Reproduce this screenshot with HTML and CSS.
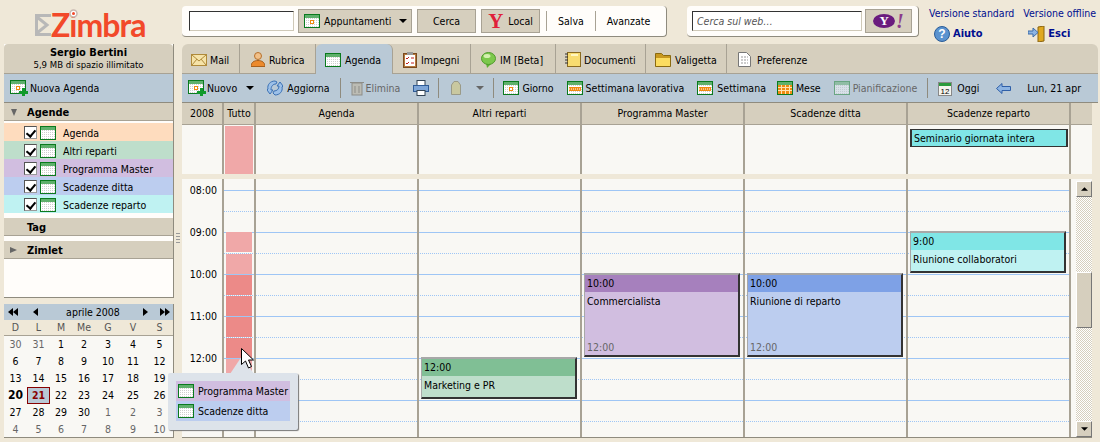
FILE: index.html
```html
<!DOCTYPE html>
<html>
<head>
  <meta charset="utf-8">
  <title>Zimbra Agenda</title>
  <link rel="stylesheet" href="styles.css">
</head>
<body>
  <svg class="defs" width="0" height="0">
    <defs>
      <pattern id="dots" width="2" height="2" patternUnits="userSpaceOnUse">
        <rect width="2" height="2" fill="#fff"/><rect width="1" height="1" fill="#cfcfcf"/>
      </pattern>
      <symbol id="cal" viewBox="0 0 16 14">
        <rect x=".5" y=".5" width="15" height="13" fill="url(#dots)" stroke="#0a7a1e"/>
        <rect x="1" y="1" width="14" height="3" fill="#5fb06c"/>
      </symbol>
      <symbol id="cal-day" viewBox="0 0 16 14">
        <use href="#cal"/>
        <rect x="6" y="6" width="4" height="4" fill="#f08a10"/><rect x="7" y="7" width="2" height="2" fill="#fff"/>
      </symbol>
      <symbol id="cal-week" viewBox="0 0 16 14">
        <use href="#cal"/>
        <rect x="2" y="6" width="12" height="4" fill="#f08a10"/>
        <path d="M2 8h12" stroke="#fff" stroke-dasharray="1 1"/>
      </symbol>
      <symbol id="cal-month" viewBox="0 0 16 14">
        <use href="#cal"/>
        <rect x="1" y="4" width="14" height="9" fill="#f08a10"/>
        <path d="M1 6.500h14M1 9.500h14M4.500 4v9M8.500 4v9M12.500 4v9" stroke="#ffe2b0"/>
      </symbol>
      <symbol id="cal-new" viewBox="0 0 18 16">
        <use href="#cal-day" width="16" height="14"/>
        <path d="M12 8h3v3h3v3h-3v3h-3v-3H9v-3h3z" fill="#119a2c"/>
      </symbol>
      <symbol id="down" viewBox="0 0 8 4"><path d="M0 0h8L4 4z"/></symbol>
      <symbol id="left" viewBox="0 0 5 8"><path d="M5 0v8L0 4z"/></symbol>
      <symbol id="right" viewBox="0 0 5 8"><path d="M0 0v8l5-4z"/></symbol>
    </defs>
  </svg>

  <div class="app">
    <header class="top">
      <div class="logo">
        <svg class="logo-mail" width="16" height="22" viewBox="0 0 16 22"><path d="M0 1.500h16M0 20.500h16M1.500 1v20M2 3l10 8L2 19" fill="none" stroke="#b8b8b8" stroke-width="3"/></svg>
        <span class="logo-text">Zimbra</span>
        <svg class="logo-lens" width="10" height="10" viewBox="0 0 10 10"><circle cx="4.500" cy="4.500" r="3.500" fill="#fff" stroke="#c8b8b0" stroke-width="1.500"/><circle cx="4.500" cy="4.500" r="1.500" fill="#f2492a"/></svg>
      </div>
      <div class="panel search">
        <input class="field name-field" type="text">
        <button class="btn appt"><svg width="16" height="14"><use href="#cal-day"/></svg>Appuntamenti<svg class="caret" width="8" height="4"><use href="#down"/></svg></button>
        <button class="btn cerca">Cerca</button>
        <button class="btn local"><span class="y-red">Y</span>Local</button>
        <span class="link-btn first">Salva</span>
        <span class="link-btn">Avanzate</span>
      </div>
      <div class="panel web">
        <input class="field web-field" type="text" placeholder="Cerca sul web…">
        <button class="btn yahoo"><span class="y-oval">Y</span><span class="y-bang">!</span></button>
      </div>
      <div class="links">
        <div class="links-col">
          <a>Versione standard</a>
          <a class="strong"><svg width="16" height="16" viewBox="0 0 16 16"><circle cx="8" cy="8" r="7.500" fill="#5b93cf" stroke="#2a5c98"/><text x="8" y="12" class="q">?</text></svg>Aiuto</a>
        </div>
        <div class="links-col">
          <a>Versione offline</a>
          <a class="strong"><svg width="17" height="16" viewBox="0 0 17 16"><path d="M10 1l6-1v15l-6 1z" fill="#e0a820" stroke="#8a6410"/><path d="M0 5h5V2l5 4.500-5 4.500V8H0z" fill="#8db4e2" stroke="#3a6aa8"/></svg>Esci</a>
        </div>
      </div>
    </header>

    <div class="body">
      <aside class="side">
        <div class="side-box">
          <div class="user">
            <b>Sergio Bertini</b>
            <span>5,9 MB di spazio illimitato</span>
          </div>
          <div class="new-cal"><svg width="18" height="16"><use href="#cal-new"/></svg>Nuova Agenda</div>
          <div class="sec-head"><i class="tri-down"></i>Agende</div>
          <ul class="cal-list">
            <li class="c-orange"><i class="check"></i><svg width="16" height="14"><use href="#cal"/></svg>Agenda</li>
            <li class="c-green"><i class="check"></i><svg width="16" height="14"><use href="#cal"/></svg>Altri reparti</li>
            <li class="c-purple"><i class="check"></i><svg width="16" height="14"><use href="#cal"/></svg>Programma Master</li>
            <li class="c-blue"><i class="check"></i><svg width="16" height="14"><use href="#cal"/></svg>Scadenze ditta</li>
            <li class="c-cyan"><i class="check"></i><svg width="16" height="14"><use href="#cal"/></svg>Scadenze reparto</li>
          </ul>
          <div class="sec-head tag">Tag</div>
          <div class="sec-head zimlet"><i class="tri-right"></i>Zimlet</div>
        </div>
        <div class="mini">
          <div class="mini-head">
            <svg class="n-dbl" width="10" height="8"><use href="#left" width="5" height="8"/><use href="#left" x="5" width="5" height="8"/></svg>
            <svg class="n-one" width="5" height="8"><use href="#left"/></svg>
            <span class="month">aprile 2008</span>
            <svg class="n-one-r" width="5" height="8"><use href="#right"/></svg>
            <svg class="n-dbl-r" width="10" height="8"><use href="#right" width="5" height="8"/><use href="#right" x="5" width="5" height="8"/></svg>
          </div>
          <div class="mini-days"><span>D</span><span>L</span><span>M</span><span>Me</span><span>G</span><span>V</span><span>S</span></div>
          <div class="mini-grid">
            <span class="off">30</span><span class="off">31</span><span>1</span><span>2</span><span>3</span><span>4</span><span>5</span>
            <span>6</span><span>7</span><span>8</span><span>9</span><span>10</span><span>11</span><span>12</span>
            <span>13</span><span>14</span><span>15</span><span>16</span><span>17</span><span>18</span><span>19</span>
            <span class="bold">20</span><span class="today">21</span><span>22</span><span>23</span><span>24</span><span>25</span><span>26</span>
            <span>27</span><span>28</span><span>29</span><span>30</span><span class="off">1</span><span class="off">2</span><span class="off">3</span>
            <span class="off">4</span><span class="off">5</span><span class="off">6</span><span class="off">7</span><span class="off">8</span><span class="off">9</span><span class="off">10</span>
          </div>
        </div>
      </aside>

      <div class="sash"><i></i><i></i><i></i><i></i></div>

      <main class="main">
        <nav class="tabs">
          <span class="tab w-mail"><svg width="16" height="12" viewBox="0 0 16 12"><rect x=".5" y=".5" width="15" height="11" fill="#f6e3a8" stroke="#b08a3a"/><path d="M1 1l7 6 7-6M1 11l5-6M15 11l-5-6" fill="none" stroke="#b08a3a"/></svg>Mail</span>
          <span class="tab w-rubrica"><svg width="14" height="15" viewBox="0 0 14 15"><circle cx="7" cy="4" r="3.500" fill="#f2c088" stroke="#b5702c"/><path d="M0 14.500c0-4 3-6 7-6s7 2 7 6z" fill="#ec8a2c" stroke="#a8601c"/></svg>Rubrica</span>
          <span class="tab active w-agenda"><svg width="16" height="14"><use href="#cal"/></svg>Agenda</span>
          <span class="tab w-impegni"><svg width="14" height="16" viewBox="0 0 14 16"><rect x=".5" y="1.500" width="13" height="14" fill="#b5783c" stroke="#7a4a20"/><rect x="2" y="3" width="10" height="11" fill="#fff"/><rect x="4" y="0" width="6" height="3" fill="#999"/><path d="M3 6l1 1 2-2M3 11l1 1 2-2M8 6h3M8 11h3" fill="none" stroke="#c02020"/></svg>Impegni</span>
          <span class="tab w-im"><svg width="15" height="16" viewBox="0 0 15 16"><path d="M5 11l1 5 4-4z" fill="#5cb030"/><ellipse cx="7.500" cy="6.500" rx="7" ry="6" fill="#7cc84c" stroke="#4f9a2c"/><ellipse cx="6" cy="4" rx="3.500" ry="2" fill="#d4f0b0"/></svg>IM [Beta]</span>
          <span class="tab w-doc"><svg width="16" height="15" viewBox="0 0 16 15"><rect x="2.500" y=".5" width="13" height="14" fill="#f8dc70" stroke="#8a6a20"/><path d="M0 2h3M0 5h3M0 8h3M0 11h3" stroke="#333"/><path d="M6 3h7" stroke="#fff6c0" stroke-width="2"/></svg>Documenti</span>
          <span class="tab w-val"><svg width="16" height="14" viewBox="0 0 16 14"><path d="M.5 13.500v-13h6l2 2h7v11z" fill="#c89820" stroke="#8a6a10"/><rect x="1" y="5" width="14" height="8" fill="#fbdc60"/></svg>Valigetta</span>
          <span class="tab last"><svg width="13" height="15" viewBox="0 0 13 15"><path d="M.5.5h8l4 4v10H.5z" fill="#fff" stroke="#777"/><path d="M3 5h7M3 8h7M3 11h7" stroke="#999" stroke-dasharray="2 1"/></svg>Preferenze</span>
        </nav>

        <div class="tools">
          <span class="tool s-nuovo"><svg width="18" height="16"><use href="#cal-new"/></svg>Nuovo<svg class="caret" width="8" height="4"><use href="#down"/></svg></span>
          <span class="tool s-aggiorna"><svg width="16" height="16" viewBox="0 0 16 16"><path d="M8 1C3 1 0 5 1 9l-1 1 3 4 3-4H4C4 6 6 4 9 4l1-2zM8 15c5 0 8-4 7-8l1-1-3-4-3 4h2c0 3-2 5-5 5l-1 2z" fill="#9cc0e8" stroke="#3a70b4"/></svg>Aggiorna</span>
          <i class="sep"></i>
          <span class="tool off s-elimina"><svg width="14" height="16" viewBox="0 0 14 16"><rect x="2" y="3" width="10" height="12" fill="#bcbcb4" stroke="#8d8d88"/><path d="M0 2.500h14M5 6v7M9 6v7" stroke="#8d8d88"/></svg>Elimina</span>
          <span class="tool s-print"><svg width="16" height="16" viewBox="0 0 16 16"><rect x="4" y=".5" width="8" height="5" fill="#fff" stroke="#345"/><rect x=".5" y="5.500" width="15" height="6" fill="#7ea6d8" stroke="#2f5b96"/><rect x="4" y="10.500" width="8" height="5" fill="#fff" stroke="#345"/></svg></span>
          <i class="sep"></i>
          <span class="tool s-tag"><svg width="10" height="14" viewBox="0 0 10 14"><path d="M.5 4L3 .5h4L9.500 4v9.500H.5z" fill="#c9c8a0" stroke="#9a9a88"/></svg></span>
          <span class="tool off s-caret"><svg class="caret" width="8" height="4"><use href="#down"/></svg></span>
          <i class="sep"></i>
          <span class="tool s-giorno"><svg width="16" height="14"><use href="#cal-day"/></svg>Giorno</span>
          <span class="tool s-lav"><svg width="16" height="14"><use href="#cal-week"/></svg>Settimana lavorativa</span>
          <span class="tool s-sett"><svg width="16" height="14"><use href="#cal-week"/></svg>Settimana</span>
          <span class="tool s-mese"><svg width="16" height="14"><use href="#cal-month"/></svg>Mese</span>
          <span class="tool off s-pian"><svg class="faded" width="16" height="14"><use href="#cal"/></svg>Pianificazione</span>
          <i class="sep"></i>
          <span class="tool s-oggi"><svg width="14" height="15" viewBox="0 0 14 15"><rect x=".5" y="1.500" width="13" height="13" fill="#f4f4ee" stroke="#888"/><rect x="1" y="2" width="12" height="3" fill="#2a9a3c"/><text x="7" y="13" class="num">12</text></svg>Oggi</span>
          <span class="tool s-back"><svg width="15" height="11" viewBox="0 0 15 11"><path d="M.5 5.500L6 .5v3h8.500v4H6v3z" fill="#8db4e2" stroke="#2f5fa8"/></svg></span>
          <span class="tool s-date">Lun, 21 apr</span>
        </div>

        <div class="cols head">
          <div>2008</div><div>Tutto</div><div>Agenda</div><div>Altri reparti</div><div>Programma Master</div><div>Scadenze ditta</div><div>Scadenze reparto</div><div class="blank"></div>
        </div>
        <div class="cols allday">
          <div></div>
          <div class="all-cell"><i class="all-bar"></i></div>
          <div></div><div></div><div></div><div></div>
          <div class="seminar-cell"><span class="seminar">Seminario giornata intera</span></div>
          <div class="blank"></div>
        </div>
        <div class="split"></div>
        <div class="cols grid">
          <div class="hours"><span>08:00</span><span>09:00</span><span>10:00</span><span>11:00</span><span>12:00</span></div>
          <div class="free">
            <i class="slot light" style="top:53px;height:20px"></i>
            <i class="slot light" style="top:75px;height:20px"></i>
            <i class="slot dark" style="top:96px;height:20px"></i>
            <i class="slot dark" style="top:117px;height:20px"></i>
            <i class="slot dark" style="top:138px;height:20px"></i>
            <i class="slot dark" style="top:159px;height:20px"></i>
            <i class="slot light" style="top:180px;height:20px"></i>
            <i class="slot light" style="top:201px;height:20px"></i>
          </div>
          <div></div>
          <div><div class="event green" style="top:178px;height:42px"><b>12:00</b><p>Marketing e PR</p></div></div>
          <div><div class="event purple" style="top:94px;height:84px"><b>10:00</b><p>Commercialista</p><em>12:00</em></div></div>
          <div><div class="event blue" style="top:94px;height:84px"><b>10:00</b><p>Riunione di reparto</p><em>12:00</em></div></div>
          <div><div class="event cyan" style="top:52px;height:42px"><b>9:00</b><p>Riunione collaboratori</p></div></div>
          <div class="blank scroll-cell">
            <div class="scrollbar">
              <span class="sb-btn"><svg width="7" height="4"><use href="#down"/></svg></span>
              <span class="sb-track"><i class="sb-thumb"></i></span>
              <span class="sb-btn"><svg width="7" height="4"><use href="#down"/></svg></span>
            </div>
          </div>
        </div>
      </main>
    </div>
  </div>

  <div class="popup">
    <div class="popup-row c-purple"><svg width="16" height="14"><use href="#cal"/></svg>Programma Master</div>
    <div class="popup-row c-blue"><svg width="16" height="14"><use href="#cal"/></svg>Scadenze ditta</div>
  </div>
  <svg class="tail" width="24" height="18" viewBox="0 0 24 18"><path d="M12 0L0 18h24z" fill="#dde3ea"/></svg>
  <svg class="cursor" width="13" height="22" viewBox="0 0 13 22"><path d="M.5.5v16l4-3.500 3 7 3-1.500-3-6.500h5z" fill="#fff" stroke="#000"/></svg>
</body>
</html>
```

FILE: styles.css
```css
* {
  box-sizing: border-box;
}

html, body {
  margin: 0;
  height: 442px;
  overflow: hidden;
}

body {
  position: relative;
  background-color: #efe8d8;
  font-family: "DejaVu Sans Condensed", "DejaVu Sans", sans-serif;
  font-stretch: condensed;
  font-size: 10.5px;
  color: #000;
}

svg {
  flex: none;
  display: block;
}

b, .strong {
  font-size: 11px;
}

.defs {
  position: absolute;
}

.app {
  width: 1100px;
  height: 442px;
  display: flex;
  flex-direction: column;
}

/* top bar */
.top {
  height: 44px;
  display: flex;
  flex: none;
}

.logo {
  width: 182px;
  flex: none;
  padding: 10px 0 0 35px;
  display: flex;
  align-items: flex-start;
  position: relative;
}

.logo-mail {
  margin-top: 4px;
}

.logo-lens {
  position: absolute;
  left: 69px;
  top: 9px;
}

.logo-text {
  font-family: "Lato", sans-serif;
  font-stretch: normal;
  font-size: 32px;
  font-weight: 700;
  line-height: 30px;
  letter-spacing: -1px;
  color: #f2492a;
}

.panel {
  height: 31px;
  flex: none;
  margin-top: 6px;
  background: #fffdfa;
  border-right: 1px solid #8f8b7e;
  border-bottom: 1px solid #8f8b7e;
  border-radius: 4px;
  display: flex;
  align-items: center;
}

.search {
  width: 485px;
  padding-left: 7px;
}

.web {
  width: 232px;
  margin-left: 20px;
  padding-left: 5px;
}

.field {
  height: 20px;
  border: 1px solid #333;
  border-right-color: #cfc9b8;
  border-bottom-color: #cfc9b8;
  background: #fff;
  padding: 0 4px;
  font: inherit;
}

.name-field {
  width: 105px;
}

.web-field {
  width: 170px;
  font-style: italic;
}

.web-field::placeholder {
  color: #555;
}

.btn {
  height: 24px;
  margin-left: 4px;
  padding: 0;
  border: 1px solid;
  border-color: #fff #777 #777 #fff;
  outline: 1px solid #a8a294;
  outline-offset: -1px;
  background: #d6cfbe;
  font: inherit;
  color: #000;
  display: flex;
  align-items: center;
  justify-content: center;
}

.appt {
  width: 114px;
  justify-content: flex-start;
  padding-left: 5px;
}

.appt svg:first-child {
  margin-right: 4px;
}

.appt .caret {
  margin-left: 8px;
}

.cerca,
.local {
  width: 59px;
  margin-left: 5px;
}

.y-red {
  font-family: "Liberation Serif", serif;
  font-stretch: normal;
  font-size: 21px;
  line-height: 21px;
  font-weight: bold;
  color: #e0203a;
  margin-right: 5px;
}

.link-btn {
  height: 20px;
  line-height: 20px;
  padding: 0 11px;
  border-left: 1px solid #a8a294;
}

.link-btn.first {
  margin-left: 6px;
}

.yahoo {
  width: 47px;
  margin-left: 3px;
  gap: 1px;
}

.y-oval {
  width: 22px;
  height: 14px;
  border-radius: 50%;
  background: #6a1b7e;
  color: #fff;
  font-family: "Liberation Serif", serif;
  font-stretch: normal;
  font-weight: bold;
  font-size: 13px;
  line-height: 14px;
  text-align: center;
}

.y-bang {
  font-family: "Liberation Serif", serif;
  font-stretch: normal;
  font-style: italic;
  font-weight: bold;
  font-size: 20px;
  line-height: 18px;
  color: #8c3a8c;
}

.links {
  margin-left: 10px;
  padding-top: 6px;
  display: flex;
  gap: 9px;
}

.links-col {
  display: flex;
  flex-direction: column;
  gap: 5px;
}

.links a {
  color: #000e8f;
  line-height: 14px;
  white-space: nowrap;
  display: flex;
  align-items: center;
  gap: 3px;
  height: 14px;
}

.links a.strong {
  font-weight: bold;
  height: 18px;
  margin-left: 5px;
}

.q {
  font-family: "Liberation Sans", sans-serif;
  font-stretch: normal;
  font-size: 12px;
  font-weight: bold;
  fill: #fff;
  text-anchor: middle;
}

.body {
  flex: 1;
  display: flex;
  min-height: 0;
}

/* left column */
.side {
  width: 170px;
  flex: none;
  margin-left: 4px;
  display: flex;
  flex-direction: column;
}

.side-box {
  height: 254px;
  background: #fffdfa;
  border-right: 1px solid #8f8b7e;
  border-bottom: 1px solid #8f8b7e;
}

.user {
  height: 30px;
  background: #d6cfbe;
  border-radius: 4px 4px 0 0;
  display: flex;
  flex-direction: column;
  align-items: center;
  padding-top: 3px;
  line-height: 12px;
  border-bottom: 1px solid #a8a294;
}

.user span {
  font-size: 9.5px;
}

.new-cal {
  height: 29px;
  background: #b9c9d6;
  display: flex;
  align-items: center;
  gap: 2px;
  padding-left: 6px;
  border-bottom: 1px solid #8f8b7e;
}

.sec-head {
  height: 18px;
  background: #d6cfbe;
  border-bottom: 1px solid #a8a294;
  font-size: 11px;
  font-weight: bold;
  line-height: 19px;
  padding-left: 23px;
  position: relative;
}

.tri-down, .tri-right {
  position: absolute;
  left: 7px;
  top: 6px;
  border-style: solid;
  border-color: transparent;
}

.tri-down {
  border-width: 7px 3.5px 0;
  border-top-color: #666;
}

.tri-right {
  left: 6px;
  border-width: 3.5px 0 3.5px 7px;
  border-left-color: #666;
}

.cal-list {
  list-style: none;
  margin: 2px 0 0;
  padding: 0;
}

.cal-list li {
  height: 18px;
  display: flex;
  align-items: center;
  padding: 1px 0 0 20px;
}

.cal-list svg {
  margin: 0 7px 0 3px;
}

.check {
  width: 13px;
  height: 13px;
  border: 1px solid;
  border-color: #555 #999 #999 #555;
  background: #fff;
  position: relative;
}

.check::after {
  content: "";
  position: absolute;
  left: 3px;
  top: 1px;
  width: 4px;
  height: 7px;
  border: solid #000;
  border-width: 0 2px 2px 0;
  transform: rotate(40deg);
}

.c-orange { background: #fedcbe; }
.c-green { background: #bedecb; }
.c-purple { background: #d1bee0; }
.c-blue { background: #bccdef; }
.c-cyan { background: #bff2f2; }

.tag,
.zimlet {
  margin-top: 5px;
}

.mini {
  height: 134px;
  margin-top: 6px;
  background: #f9f8f4;
  border-right: 1px solid #8f8b7e;
  border-bottom: 1px solid #8f8b7e;
}

.mini-head {
  height: 16px;
  background: #b9c9d6;
  display: flex;
  align-items: center;
  padding-left: 4px;
  white-space: nowrap;
}

.n-one { margin-left: 15px; }
.n-one-r { margin-left: 20px; }
.n-dbl-r { margin-left: 12px; }

.month {
  width: 60px;
  margin-left: 25px;
  text-align: center;
}

.mini-days, .mini-grid {
  display: grid;
  grid-template-columns: 23px 23px 22px 24px 24px 26px 27px;
  text-align: center;
}

.mini-days {
  height: 16px;
  line-height: 15px;
  background: #efe8d8;
  border-bottom: 1px solid #a8a294;
  color: #555;
}

.mini-grid {
  grid-auto-rows: 17px;
  line-height: 17px;
}

.off {
  color: #666;
}

.bold {
  font-weight: bold;
  font-size: 12px;
}

.today {
  background: #b9c9d6;
  border: 1px solid #800;
  color: #800;
  font-weight: bold;
  line-height: 15px;
}

.sash {
  width: 8px;
  flex: none;
  padding: 189px 2px 0;
}

.sash i {
  display: block;
  height: 1px;
  margin-bottom: 2px;
  background: #999;
}

/* main column */
.main {
  width: 916px;
  flex: none;
  display: flex;
  flex-direction: column;
}

.tabs {
  height: 30px;
  flex: none;
  background: #d6cfbe;
  border-radius: 6px 6px 0 0;
  border-bottom: 1px solid #a8a294;
  display: flex;
}

.tab {
  height: 29px;
  display: flex;
  align-items: center;
  gap: 4px;
  padding: 2px 0 0 9px;
  border-right: 1px solid #a8a294;
}

.tab.last {
  border-right: 0;
  padding-left: 11px;
  gap: 6px;
}

.w-mail { width: 58px; gap: 3px; }
.w-rubrica { width: 76px; padding-left: 11px; }
.w-agenda { width: 77px; }
.w-impegni { width: 78px; padding-left: 10px; }
.w-im { width: 85px; padding-left: 10px; }
.w-doc { width: 90px; gap: 3px; }
.w-val { width: 81px; }

.tab.active {
  height: 30px;
  background: #b9c9d6;
  border-radius: 6px 6px 0 0;
}

.tools {
  height: 29px;
  flex: none;
  background: #b9c9d6;
  border-bottom: 1px solid #8f8b7e;
  display: flex;
  align-items: center;
  white-space: nowrap;
}

.tool {
  display: flex;
  align-items: center;
  gap: 3px;
}

.tool.off {
  color: #666;
}

.faded {
  opacity: .45;
}

.sep {
  width: 1px;
  height: 20px;
  background: #8f8b7e;
  flex: none;
}

.s-nuovo { margin-left: 6px; gap: 1px; }
.s-nuovo .caret { margin-left: 8px; }
.s-aggiorna { margin: 0 10px 0 13px; gap: 4px; }
.s-elimina { margin-left: 9px; gap: 2px; }
.s-print { margin: 0 9px 0 13px; }
.s-tag { margin-left: 12px; }
.s-caret { margin: 0 9px 0 15px; }
.s-caret svg { fill: #666; }
.s-giorno { margin-left: 9px; }
.s-lav { margin-left: 13px; }
.s-sett { margin-left: 13px; gap: 4px; }
.s-mese { margin-left: 11px; }
.s-pian { margin: 0 10px 0 13px; }
.s-oggi { margin-left: 10px; gap: 5px; }
.s-back { margin-left: 17px; }
.s-date { margin-left: 16px; }

.cols {
  width: 910px;
  display: grid;
  grid-template-columns: 42px 32px repeat(5, 163px) 21px;
  flex: none;
}

.cols > div {
  border-right: 2px solid #a8a294;
  position: relative;
}

.cols > .blank {
  border-right: 0;
}

.head {
  height: 22px;
  background: #d6cfbe;
  line-height: 21px;
  text-align: center;
  border-bottom: 1px solid #a8a294;
}

.allday {
  height: 49px;
  background: #f9f8f4;
}

.all-cell {
  padding: 1px 1px 0;
}

.all-bar {
  display: block;
  height: 48px;
  background: #f0a8a8;
}

.seminar-cell {
  padding: 4px 1px 0 2px;
}

.seminar {
  display: block;
  height: 18px;
  line-height: 17px;
  padding-left: 2px;
  background: #80e6e6;
  border: 1px solid #333;
  border-width: 1px 2px 1px 2px;
}

.split {
  height: 5px;
  flex: none;
}

/* day grid: hour lines every 42px, dotted half hours on top */
.grid {
  height: 259px;
  background-color: #f9f8f4;
  background-image: repeating-linear-gradient(180deg, transparent 0 11px, #9fc6f5 11px 12px, transparent 12px 42px);
  border-bottom: 1px solid #8f8b7e;
  position: relative;
}

.grid::before {
  content: "";
  position: absolute;
  inset: 0;
  background-image: repeating-linear-gradient(180deg, transparent 0 32px, #9fc6f5 32px 33px, transparent 33px 42px);
  -webkit-mask-image: repeating-linear-gradient(90deg, #000 0 1px, transparent 1px 2px);
  mask-image: repeating-linear-gradient(90deg, #000 0 1px, transparent 1px 2px);
}

.grid > .hours {
  background: #f9f8f4;
  text-align: right;
  padding: 4px 5px 0 0;
}

.hours span {
  display: block;
  height: 42px;
  line-height: 14px;
}

.slot {
  position: absolute;
  left: 2px;
  right: 2px;
  display: block;
}

.slot.light { background: #f0a8a8; }
.slot.dark { background: #ec8a88; }

.event {
  position: absolute;
  left: 2px;
  width: 156px;
  border: solid;
  border-color: #a8a8a8 #333 #333 #a8a8a8;
  border-width: 2px 2px 2px 1px;
  overflow: hidden;
}

.event b {
  display: block;
  height: 17px;
  font-size: 10.5px;
  font-weight: normal;
  line-height: 16px;
  padding-left: 2px;
}

.event p {
  margin: 0;
  line-height: 16px;
  padding: 1px 0 0 2px;
}

.event em {
  position: absolute;
  left: 2px;
  bottom: 1px;
  font-style: normal;
  color: #666;
  line-height: 14px;
}

.event.green { background: #bedecb; }
.event.green b { background: #80bf95; }
.event.purple { background: #d1bee0; }
.event.purple b { background: #a680bd; }
.event.blue { background: #bccdef; }
.event.blue b { background: #7ea1e6; }
.event.cyan { background: #bff2f2; }
.event.cyan b { background: #80e6e6; }

.scroll-cell {
  background: #f9f8f4;
}

.scrollbar {
  position: absolute;
  left: 5px;
  top: 2px;
  width: 16px;
  height: 256px;
  display: flex;
  flex-direction: column;
}

.sb-btn {
  height: 16px;
  flex: none;
  background: #d6cfbe;
  border: 1px solid;
  border-color: #fff #777 #777 #fff;
  display: flex;
  align-items: center;
  justify-content: center;
}

.sb-btn:first-child svg {
  transform: scaleY(-1);
}

.sb-track {
  flex: 1;
  position: relative;
  background: repeating-conic-gradient(#d6cfbe 0 25%, #fff 0 50%) 0 0 / 2px 2px;
}

.sb-thumb {
  position: absolute;
  left: 0;
  right: 0;
  top: 75px;
  height: 56px;
  background: #d6cfbe;
  border: 1px solid;
  border-color: #fff #777 #777 #fff;
}

/* hover popup over the free/busy column */
.popup {
  position: absolute;
  left: 168px;
  top: 373px;
  width: 130px;
  height: 57px;
  padding: 8px;
  background: #dde3ea;
  box-shadow: 1px 1px 1px #777;
  border-radius: 2px;
}

.popup-row {
  height: 20px;
  display: flex;
  align-items: center;
  gap: 4px;
  padding-left: 2px;
  white-space: nowrap;
}

.tail {
  position: absolute;
  left: 230px;
  top: 356px;
}

.cursor {
  position: absolute;
  left: 241px;
  top: 348px;
}

.num {
  font-family: "Liberation Sans", sans-serif;
  font-stretch: normal;
  font-size: 8px;
  text-anchor: middle;
}
```
